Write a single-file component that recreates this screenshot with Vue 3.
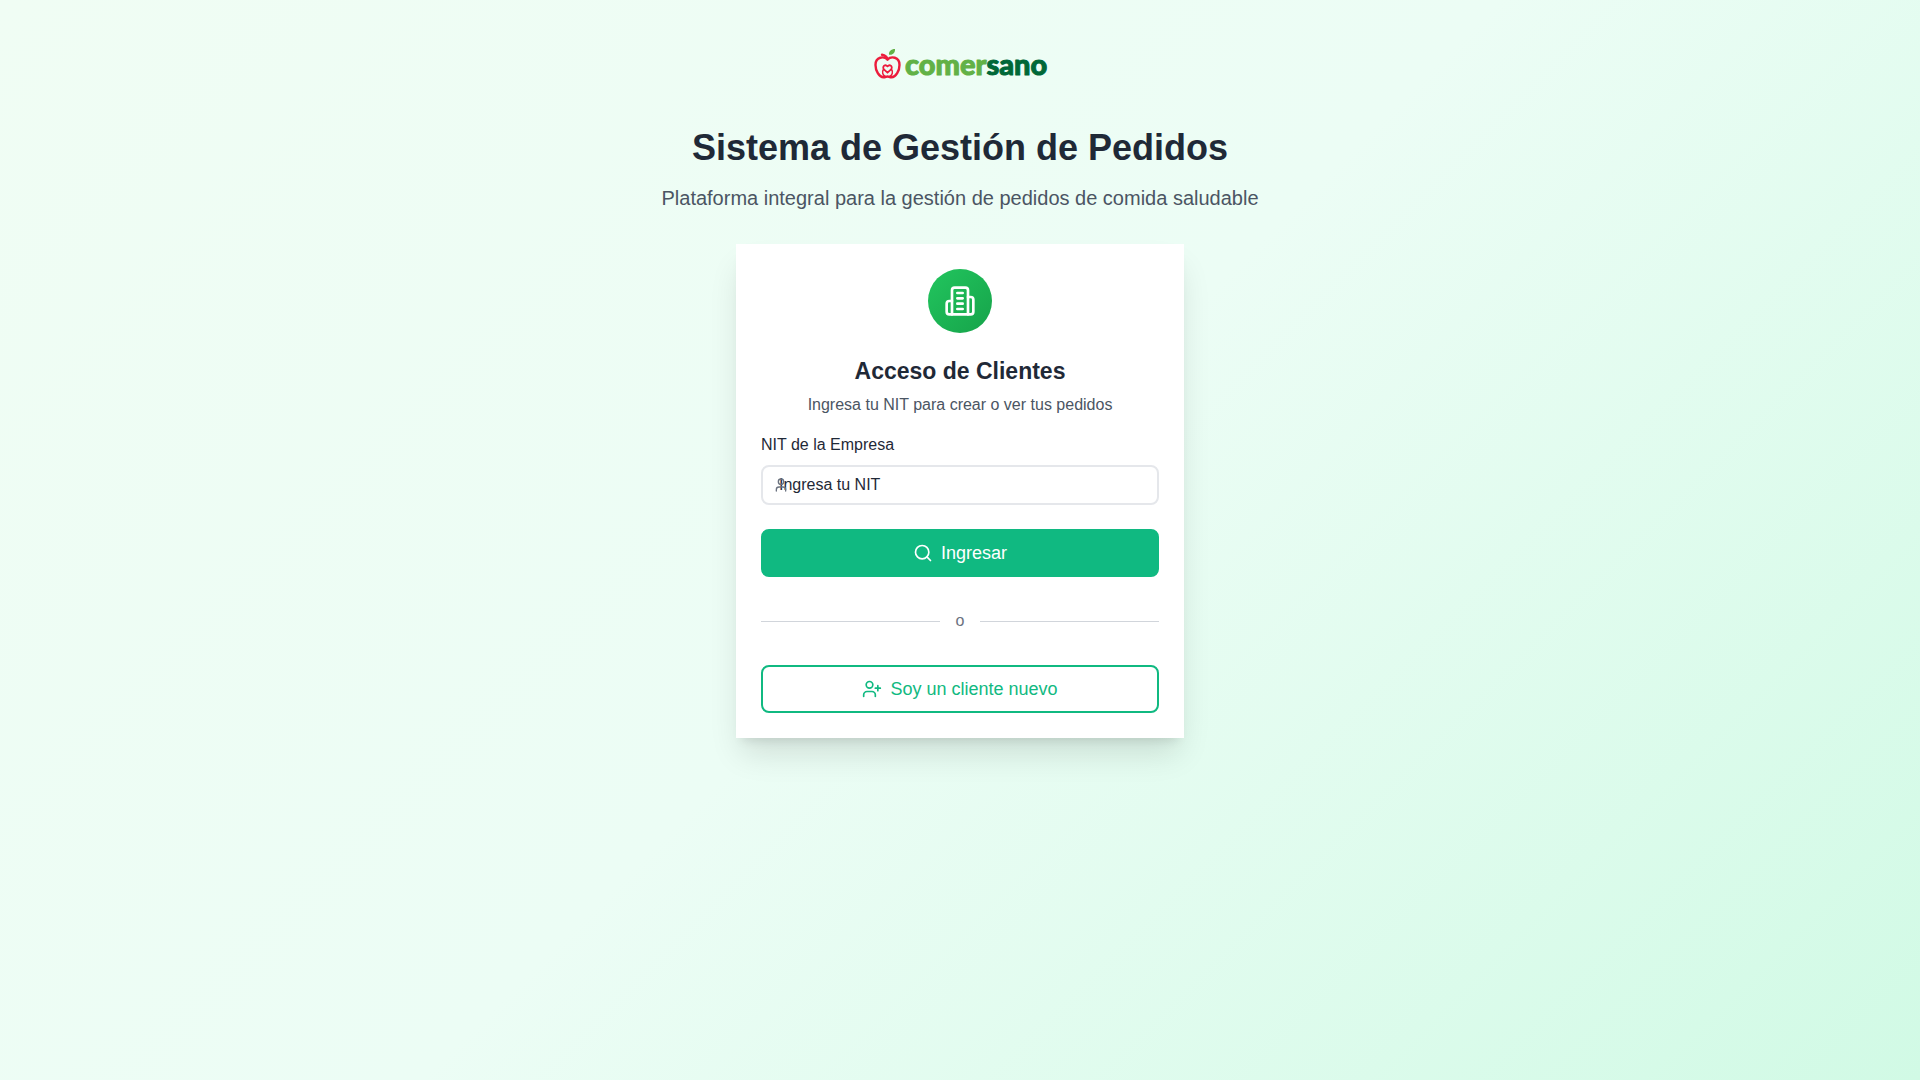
<script setup>
import { ref } from 'vue'

const nit = ref('')

const ingresar = () => {
  nit.value = nit.value.trim()
}
</script>

<template>
  <main class="page">
    <header class="header">
      <svg class="logo" viewBox="0 0 176 64" role="img" aria-label="comersano">
        <g fill="none" stroke="#ec1c3c" stroke-width="2.400" stroke-linecap="round" stroke-linejoin="round">
          <path d="M15.500 27.500C12 24 3.500 24.500 3.500 33c0 5.500 3.500 12.300 8 12.300 2 0 2.500-.8 4-.8s2 .8 4 .8c4.500 0 8-6.800 8-12.300 0-8.500-8.500-9-12-5.500Z" />
          <path d="M15.500 27.500c-.5-2.800-2.500-4.300-5.500-4.800" />
          <path d="M15.500 40.700l-3.600-3.400c-2.200-3 1.500-5.400 3.600-2.900 2.100-2.500 5.800-.1 3.600 2.900Z" stroke-width="1.800" />
          <path d="M11.400 37.500c-1.800 2.700-.6 5.500 2 7M19.600 37.500c1.800 2.700.6 5.500-2 7" stroke-width="1.500" />
        </g>
        <path d="M17 22.700C16.500 19.500 19 17 23 17c.3 3.500-2 6.300-6 5.700Z" fill="#62b146" />
        <text class="logo-text" x="33" y="43"><tspan class="logo-light">comer</tspan><tspan class="logo-dark">sano</tspan></text>
      </svg>
      <h1>Sistema de Gestión de Pedidos</h1>
      <p class="subtitle">Plataforma integral para la gestión de pedidos de comida saludable</p>
    </header>

    <section class="card">
      <div class="badge">
        <svg class="icon-lg" viewBox="0 0 24 24">
          <path d="M6 22V4a2 2 0 0 1 2-2h8a2 2 0 0 1 2 2v18Z" />
          <path d="M6 12H4a2 2 0 0 0-2 2v6a2 2 0 0 0 2 2h2" />
          <path d="M18 9h2a2 2 0 0 1 2 2v9a2 2 0 0 1-2 2h-2" />
          <path d="M10 6h4M10 10h4M10 14h4M10 18h4" />
        </svg>
      </div>
      <h2>Acceso de Clientes</h2>
      <p class="description">Ingresa tu NIT para crear o ver tus pedidos</p>

      <form @submit.prevent="ingresar">
        <label for="nit">NIT de la Empresa</label>
        <div class="field">
          <input id="nit" v-model="nit" type="text" placeholder="Ingresa tu NIT">
          <svg class="icon-sm" viewBox="0 0 24 24">
            <path d="M19 21v-2a4 4 0 0 0-4-4H9a4 4 0 0 0-4 4v2" />
            <circle cx="12" cy="7" r="4" />
          </svg>
        </div>
        <button class="btn btn-primary" type="submit">
          <svg class="icon" viewBox="0 0 24 24">
            <circle cx="11" cy="11" r="8" />
            <path d="m21 21-4.300-4.300" />
          </svg>
          Ingresar
        </button>
      </form>

      <div class="divider"><span>o</span></div>

      <button class="btn btn-outline" type="button">
        <svg class="icon" viewBox="0 0 24 24">
          <path d="M16 21v-2a4 4 0 0 0-4-4H6a4 4 0 0 0-4 4v2" />
          <circle cx="9" cy="7" r="4" />
          <path d="M19 8v6M22 11h-6" />
        </svg>
        Soy un cliente nuevo
      </button>
    </section>
  </main>
</template>

<style>
body {
  margin: 0;
}
</style>

<style scoped>
* {
  box-sizing: border-box;
}

.page {
  min-height: 100vh;
  padding: 32px 16px;
  font-family: "Liberation Sans", Arial, sans-serif;
  font-size: 16px;
  line-height: 24px;
  color: #1f2937;
  background: linear-gradient(135deg, #f0fdf4, #ecfdf5, #d1fae5);
}

h1,
h2,
p {
  margin: 0;
}

/* Encabezado */
.header {
  text-align: center;
  margin-bottom: 32px;
}

.logo {
  display: block;
  width: 176px;
  height: 64px;
  margin: 0 auto 32px;
}

.logo-text {
  font-family: Lato, sans-serif;
  font-size: 29px;
  font-weight: 900;
  stroke-width: 1px;
  stroke-linejoin: round;
}

.logo-light {
  fill: #62b146;
  stroke: #62b146;
}

.logo-dark {
  fill: #006838;
  stroke: #006838;
}

h1 {
  font-size: 36px;
  line-height: 40px;
  margin-bottom: 16px;
}

.subtitle {
  font-size: 20px;
  line-height: 28px;
  color: #4b5563;
}

/* Tarjeta de acceso */
.card {
  display: flex;
  flex-direction: column;
  max-width: 448px;
  margin: 0 auto;
  padding: 24px;
  border: 1px solid #fff;
  background: #fff;
  box-shadow: 0 20px 30px -5px rgba(0, 0, 0, 0.12), 0 8px 10px -6px rgba(0, 0, 0, 0.1);
}

.badge {
  display: flex;
  align-items: center;
  justify-content: center;
  align-self: center;
  width: 64px;
  height: 64px;
  margin-bottom: 22px;
  border-radius: 50%;
  color: #fff;
  background: linear-gradient(135deg, #22c55e, #16a34a);
}

h2 {
  font-size: 23px;
  line-height: 32px;
  margin-bottom: 6px;
  text-align: center;
}

.description {
  margin-bottom: 16px;
  text-align: center;
  color: #4b5563;
}

form {
  display: flex;
  flex-direction: column;
}

label {
  margin-bottom: 8px;
}

.field {
  position: relative;
  display: flex;
  margin-bottom: 24px;
}

input {
  width: 100%;
  height: 40px;
  padding: 0 16px;
  border: 2px solid #e5e7eb;
  border-radius: 8px;
  background: #fff;
  font: inherit;
  color: inherit;
}

input::placeholder {
  color: #1f2937;
  opacity: 1;
}

.icon,
.icon-sm,
.icon-lg {
  flex-shrink: 0;
  fill: none;
  stroke: currentColor;
  stroke-width: 2;
  stroke-linecap: round;
  stroke-linejoin: round;
}

.icon {
  width: 20px;
  height: 20px;
}

.icon-lg {
  width: 32px;
  height: 32px;
}

.icon-sm {
  position: absolute;
  left: 12px;
  top: 12px;
  width: 16px;
  height: 16px;
  color: #6b7280;
  pointer-events: none;
}

.btn {
  display: flex;
  align-items: center;
  justify-content: center;
  gap: 8px;
  width: 100%;
  height: 48px;
  border: 2px solid #10b981;
  border-radius: 8px;
  font-family: inherit;
  font-size: 18px;
  line-height: 28px;
  cursor: pointer;
}

.btn-primary {
  color: #fff;
  background: #10b981;
}

.btn-outline {
  color: #10b981;
  background: #fff;
}

.divider {
  display: flex;
  align-items: center;
  gap: 16px;
  margin: 32px 0;
  color: #6b7280;
}

.divider::before,
.divider::after {
  content: "";
  flex: 1;
  border-top: 1px solid #d1d5db;
}
</style>
